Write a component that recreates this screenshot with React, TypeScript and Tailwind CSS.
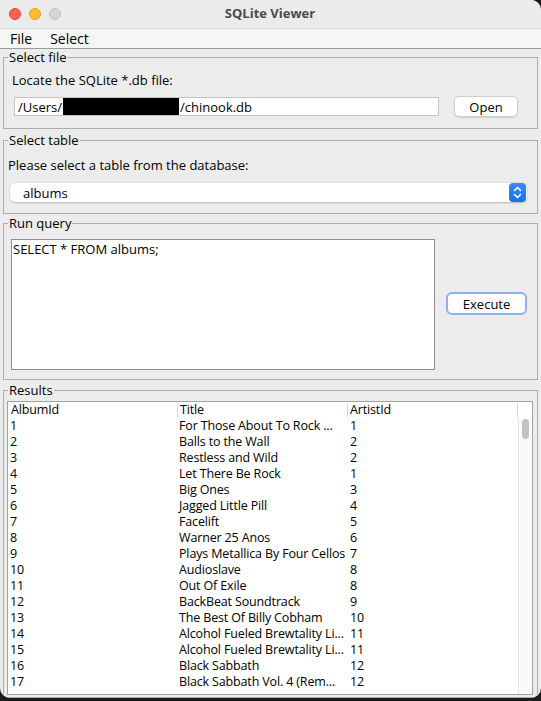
import React from 'react';

type Row = { id: number; title: string; artist: number };

const rows: Row[] = [
  { id: 1, title: 'For Those About To Rock ...', artist: 1 },
  { id: 2, title: 'Balls to the Wall', artist: 2 },
  { id: 3, title: 'Restless and Wild', artist: 2 },
  { id: 4, title: 'Let There Be Rock', artist: 1 },
  { id: 5, title: 'Big Ones', artist: 3 },
  { id: 6, title: 'Jagged Little Pill', artist: 4 },
  { id: 7, title: 'Facelift', artist: 5 },
  { id: 8, title: 'Warner 25 Anos', artist: 6 },
  { id: 9, title: 'Plays Metallica By Four Cellos', artist: 7 },
  { id: 10, title: 'Audioslave', artist: 8 },
  { id: 11, title: 'Out Of Exile', artist: 8 },
  { id: 12, title: 'BackBeat Soundtrack', artist: 9 },
  { id: 13, title: 'The Best Of Billy Cobham', artist: 10 },
  { id: 14, title: 'Alcohol Fueled Brewtality Li...', artist: 11 },
  { id: 15, title: 'Alcohol Fueled Brewtality Li...', artist: 11 },
  { id: 16, title: 'Black Sabbath', artist: 12 },
  { id: 17, title: 'Black Sabbath Vol. 4 (Rem...', artist: 12 },
];

function Panel({ title, className, children }: { title: string; className?: string; children: React.ReactNode }) {
  return (
    <fieldset className={`border border-[#adadad] p-0 m-0 min-w-0 ${className ?? ''}`}>
      <legend className="ml-[4px] px-[1px] h-[16px] leading-[16px]">{title}</legend>
      {children}
    </fieldset>
  );
}

function Stepper() {
  return (
    <svg width="17" height="19" viewBox="0 0 17 19">
      <defs>
        <linearGradient id="stp" x1="0" y1="0" x2="0" y2="1">
          <stop offset="0" stopColor="#3b8af8" />
          <stop offset="1" stopColor="#1c6ef0" />
        </linearGradient>
      </defs>
      <rect x="0" y="0" width="17" height="19" rx="4" fill="url(#stp)" />
      <path d="M5.5 7.5 L8.5 4.5 L11.5 7.5" fill="none" stroke="#fff" strokeWidth="1.6" strokeLinecap="round" strokeLinejoin="round" />
      <path d="M5.5 11.5 L8.5 14.5 L11.5 11.5" fill="none" stroke="#fff" strokeWidth="1.6" strokeLinecap="round" strokeLinejoin="round" />
    </svg>
  );
}

export default function App() {
  return (
    <div className="w-[541px] h-[701px] bg-[#1c1a1c] text-[13px] text-black" style={{ fontFamily: '"Open Sans", "DejaVu Sans", sans-serif' }}>
      <div className="h-[698px] bg-[#ececec] rounded-tr-[10px] rounded-b-[10px] overflow-hidden flex flex-col">
        {/* title bar */}
        <div className="h-[28px] bg-[#ebebeb] flex items-center">
          <div className="flex gap-[8px] pl-[9px]">
            <span className="w-[12px] h-[12px] rounded-full bg-[#fe5f57] border border-[#e0443e]" />
            <span className="w-[12px] h-[12px] rounded-full bg-[#febc2e] border border-[#dea123]" />
            <span className="w-[12px] h-[12px] rounded-full bg-[#d4d4d4] border border-[#c4c4c4]" />
          </div>
          <div className="flex-1 text-center font-bold text-[13px] text-[#4a4a4a] pr-[62px]">SQLite Viewer</div>
        </div>

        {/* menu bar */}
        <div className="h-[21px] bg-[#f6f6f6] border-t border-[#d8d8d8] border-b border-b-[#9c9c9c] flex items-center text-[14px] gap-[18px] pl-[10px]">
          <span>File</span>
          <span>Select</span>
        </div>

        <div className="flex flex-col px-[3px]">
          {/* select file */}
          <Panel title="Select file">
            <div className="pl-[8px] mt-[7px] h-[16px] leading-[16px]">Locate the SQLite *.db file:</div>
            <div className="flex items-center mt-[8px] mb-[11px] pl-[10px]">
              <div className="w-[425px] h-[19px] bg-white border border-[#c4c4c4] flex items-center pl-[3px] leading-[16px] whitespace-nowrap">
                <span>/Users/</span>
                <span className="inline-block w-[116px] h-[17px] bg-black mx-[1px]" />
                <span>/chinook.db</span>
              </div>
              <button className="ml-[15px] w-[64px] h-[21px] bg-white rounded-[5px] border border-[#cfcfcf] shadow-[0_1px_1px_rgba(0,0,0,0.12)] leading-[18px]">
                Open
              </button>
            </div>
          </Panel>

          {/* select table */}
          <Panel title="Select table" className="mt-[3px]">
            <div className="pl-[4px] mt-[9px] h-[16px] leading-[16px]">Please select a table from the database:</div>
            <div className="mt-[10px] mb-[10px] ml-[6px] mr-[10px] h-[20px] bg-white rounded-[5px] border-b border-b-[#c2c2c2] shadow-[0_0_0_0.5px_rgba(0,0,0,0.12)] flex items-center justify-between pl-[13px] pr-[1px]">
              <span className="leading-[16px]">albums</span>
              <Stepper />
            </div>
          </Panel>

          {/* run query */}
          <Panel title="Run query" className="mt-[1px]">
            <div className="flex items-center mt-[8px] mb-[9px] pl-[7px] pr-[10px]">
              <textarea
                readOnly
                defaultValue="SELECT * FROM albums;"
                className="w-[425px] h-[131px] bg-white border border-[#8e8e8e] resize-none outline-none px-[1px] py-[1px] leading-[16px]"
              />
              <button className="ml-[11px] -mt-[2px] w-[81px] h-[23px] bg-white rounded-[6px] border-2 border-[#86b4f0] leading-[18px]">
                Execute
              </button>
            </div>
          </Panel>

          {/* results */}
          <Panel title="Results" className="mt-[2px]">
            <div className="mt-[3px] mb-[2px] ml-[3px] mr-[4px] h-[294px] bg-white border border-[#a2a2a2] flex overflow-hidden text-[12.5px] tracking-[-0.15px]">
              <div className="w-[510px] flex flex-col">
                <div className="grid grid-cols-3 h-[16px]">
                  <div className="pl-[3px] border-r border-[#dadada] my-[1px] leading-[13px]">AlbumId</div>
                  <div className="pl-[2px] border-r border-[#dadada] my-[1px] leading-[13px]">Title</div>
                  <div className="pl-[2px] border-r border-[#dadada] my-[1px] leading-[13px]">ArtistId</div>
                </div>
                {rows.map((r) => (
                  <div key={r.id} className="grid grid-cols-3 h-[16px] leading-[15px] whitespace-nowrap">
                    <div className="pl-[2px] overflow-hidden">{r.id}</div>
                    <div className="pl-[1px] overflow-hidden">{r.title}</div>
                    <div className="pl-[2px] overflow-hidden">{r.artist}</div>
                  </div>
                ))}
              </div>
              <div className="flex-1 bg-[#fafafa] border-l border-[#e6e6e6] mt-[16px] flex justify-center pt-[1px]">
                <div className="w-[7px] h-[20px] rounded-full bg-[#c2c2c2]" />
              </div>
            </div>
          </Panel>
        </div>
      </div>
    </div>
  );
}
